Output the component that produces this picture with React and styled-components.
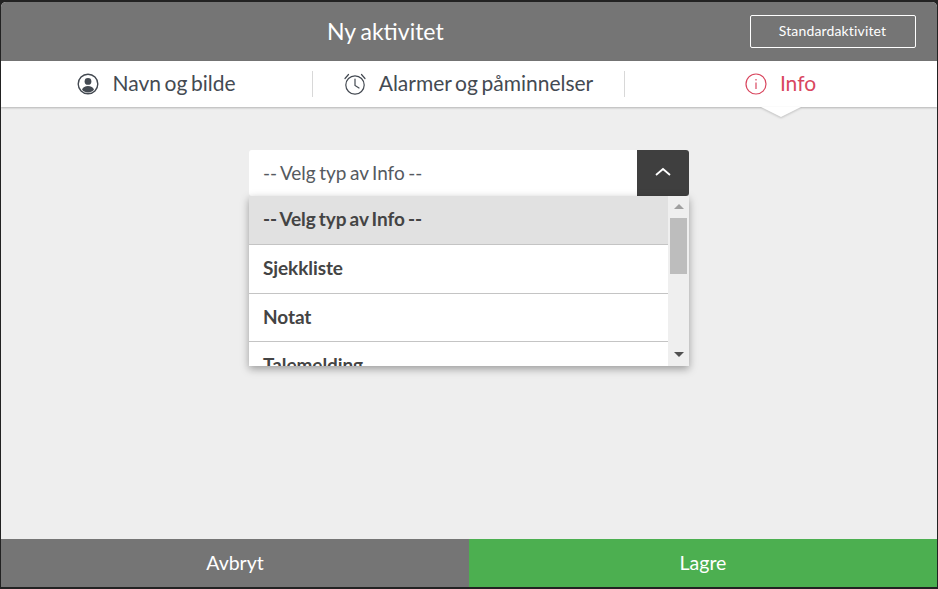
import React from "react";
import styled, { createGlobalStyle } from "styled-components";

const Global = createGlobalStyle`
    html, body {
        margin: 0;
        padding: 0;
        height: 100%;
        background: #222;
    }
    #root {
        height: 100%;
    }
`
const Dialog = styled.div`
    width: 938px;
    height: 589px;
    box-sizing: border-box;
    padding: 2px 1px 2px 1px;
    font-family: Lato, "Open Sans", sans-serif;
    overflow: hidden;
`
const Panel = styled.div`
    height: 100%;
    display: flex;
    flex-direction: column;
    background: #eeeeee;
    border-radius: 5px 5px 0 0;
    overflow: hidden;
`
const Header = styled.div`
    height: 59px;
    flex: none;
    background: #757575;
    display: grid;
    grid-template-columns: 1fr auto 1fr;
    align-items: center;
    padding-left: 270px;
    padding-right: 21px;
`
const Title = styled.div`
    grid-column: 1 / 3;
    justify-self: start;
    padding-left: 56px;
    margin-top: -2px;
    color: #fff;
    font-size: 23px;
    word-spacing: -1px;
    line-height: 26px;
`
const HeaderButton = styled.button`
    grid-column: 3;
    justify-self: end;
    width: 166px;
    height: 33px;
    box-sizing: border-box;
    background: transparent;
    border: 1px solid #fff;
    border-radius: 2px;
    color: #fff;
    font-family: inherit;
    font-size: 14px;
    letter-spacing: 0.15px;
    padding: 0 1px 2px 0;
`
const Tabs = styled.div`
    height: 46px;
    flex: none;
    background: #fff;
    display: grid;
    grid-template-columns: 312px 312px 1fr;
    align-items: center;
    position: relative;
    box-shadow: 0 1px 2px rgba(0, 0, 0, 0.25);
`
const Tab = styled.div`
    position: relative;
    height: 26px;
    display: flex;
    align-items: center;
    justify-content: center;
    gap: 13px;
    font-size: 21px;
    word-spacing: -1.8px;
    color: ${p => (p.$active ? "#d9475f" : "#444a52")};
    border-right: ${p => (p.$last ? "none" : "1px solid #d8d8d8")};
    padding-right: ${p => (p.$last ? "1px" : "0")};
    ${p => p.$active && `
        &::after {
            content: "";
            position: absolute;
            left: 50%;
            bottom: -20px;
            margin-left: -20px;
            width: 0;
            height: 0;
            border-left: 20px solid transparent;
            border-right: 20px solid transparent;
            border-top: 10px solid #fff;
            filter: drop-shadow(0 1px 1px rgba(0, 0, 0, 0.2));
        }
    `}
`
const TabLabel = styled.span`
    margin-top: -3px;
`
const Content = styled.div`
    flex: 1;
    display: flex;
    justify-content: center;
    padding-top: 43px;
`
const SelectWrap = styled.div`
    position: relative;
    width: 440px;
    height: 46px;
`
const SelectBox = styled.div`
    height: 46px;
    display: flex;
    background: #fff;
    border-radius: 3px;
    overflow: hidden;
`
const SelectText = styled.div`
    flex: 1;
    display: flex;
    align-items: center;
    padding-left: 14px;
    padding-bottom: 2px;
    font-size: 19px;
    word-spacing: -1.4px;
    color: #555a60;
`
const SelectToggle = styled.div`
    width: 52px;
    padding-bottom: 3px;
    background: #3f3f3f;
    display: flex;
    align-items: center;
    justify-content: center;
`
const Dropdown = styled.div`
    position: absolute;
    left: 0;
    right: 0;
    top: 46px;
    height: 170px;
    display: flex;
    overflow: hidden;
    background: #fff;
    box-shadow: 0 3px 8px rgba(0, 0, 0, 0.35);
`
const List = styled.div`
    flex: 1;
    overflow: hidden;
`
const Option = styled.div`
    height: ${p => (p.$selected ? "49px" : "48px")};
    box-sizing: border-box;
    display: flex;
    align-items: center;
    padding-left: 14px;
    padding-bottom: 3px;
    margin-bottom: 0.5px;
    font-size: 19px;
    font-weight: 700;
    letter-spacing: -0.08px;
    word-spacing: -1.4px;
    color: #444;
    background: ${p => (p.$selected ? "#e1e1e1" : "#fff")};
    border-bottom: 1px solid #c4c4c4;
`
const Scrollbar = styled.div`
    width: 21px;
    flex: none;
    background: #efefef;
    display: flex;
    flex-direction: column;
    align-items: center;
    padding-top: 8px;
    box-sizing: border-box;
`
const Thumb = styled.div`
    width: 17px;
    height: 56px;
    margin-top: 9px;
    background: #bdbdbd;
`
const ArrowDown = styled.div`
    margin-top: auto;
    margin-bottom: 9px;
    width: 0;
    height: 0;
    border-left: 5px solid transparent;
    border-right: 5px solid transparent;
    border-top: 5px solid #505050;
`
const ArrowUp = styled.div`
    width: 0;
    height: 0;
    border-left: 5px solid transparent;
    border-right: 5px solid transparent;
    border-bottom: 5px solid #a0a0a0;
`
const Footer = styled.div`
    height: 48px;
    flex: none;
    display: grid;
    grid-template-columns: 468px 1fr;
`
const FooterButton = styled.button`
    border: none;
    padding: 0 0 2px;
    background: ${p => (p.$save ? "#4caf50" : "#757575")};
    color: #fff;
    font-family: inherit;
    font-size: 19.5px;
`

const UserIcon = () => (
    <svg width="22" height="22" viewBox="0 0 22 22" fill="none">
        <circle cx="11" cy="11" r="9.8" stroke="#444a52" strokeWidth="1.4" />
        <circle cx="11" cy="8.4" r="3.4" fill="#444a52" />
        <path d="M5 16.800c.8-2.700 3.200-3.800 6-3.800s5.200 1.100 6 3.800c-1.600 1.700-3.700 2.600-6 2.600s-4.400-.9-6-2.600z" fill="#444a52" />
    </svg>
)

const ClockIcon = () => (
    <svg width="22" height="24" viewBox="0 0 22 24" fill="none" stroke="#444a52" strokeWidth="1.2" strokeLinecap="round">
        <circle cx="11" cy="13" r="9.2" />
        <path d="M11 7v6.400l4 2.600" />
        <path d="M1 6.500 4.500 2.500" />
        <path d="M21 6.500 17.500 2.500" />
    </svg>
)

const InfoIcon = () => (
    <svg width="22" height="22" viewBox="0 0 22 22" fill="none" stroke="#d9475f" strokeWidth="1.2">
        <circle cx="11" cy="11" r="10" />
        <path d="M11 9.500v6.500" />
        <path d="M11 6v1.500" />
    </svg>
)

const Chevron = () => (
    <svg width="16" height="9" viewBox="0 0 16 9" fill="none" stroke="#fff" strokeWidth="1.8">
        <path d="M1 8 8 2l7 6" />
    </svg>
)

const App = () => {
    return (
        <Dialog>
            <Global />
            <Panel>
                <Header>
                    <Title>Ny aktivitet</Title>
                    <HeaderButton>Standardaktivitet</HeaderButton>
                </Header>
                <Tabs>
                    <Tab><UserIcon /><TabLabel>Navn og bilde</TabLabel></Tab>
                    <Tab><ClockIcon /><TabLabel>Alarmer og påminnelser</TabLabel></Tab>
                    <Tab $active $last><InfoIcon /><TabLabel>Info</TabLabel></Tab>
                </Tabs>
                <Content>
                    <SelectWrap>
                        <SelectBox>
                            <SelectText>-- Velg typ av Info --</SelectText>
                            <SelectToggle><Chevron /></SelectToggle>
                        </SelectBox>
                        <Dropdown>
                            <List>
                                <Option $selected>-- Velg typ av Info --</Option>
                                <Option>Sjekkliste</Option>
                                <Option>Notat</Option>
                                <Option>Talemelding</Option>
                            </List>
                            <Scrollbar>
                                <ArrowUp />
                                <Thumb />
                                <ArrowDown />
                            </Scrollbar>
                        </Dropdown>
                    </SelectWrap>
                </Content>
                <Footer>
                    <FooterButton>Avbryt</FooterButton>
                    <FooterButton $save>Lagre</FooterButton>
                </Footer>
            </Panel>
        </Dialog>
    )
}

export default App;
